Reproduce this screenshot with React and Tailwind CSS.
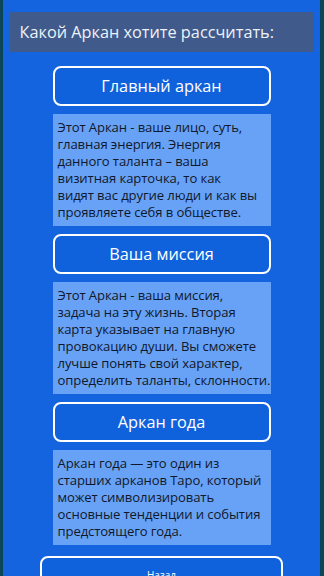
import React from 'react';

const sections = [
  {
    title: 'Главный аркан',
    lines: [
      'Этот Аркан - ваше лицо, суть,',
      'главная энергия. Энергия',
      'данного таланта – ваша',
      'визитная карточка, то как',
      'видят вас другие люди и как вы',
      'проявляете себя в обществе.',
    ],
  },
  {
    title: 'Ваша миссия',
    lines: [
      'Этот Аркан - ваша миссия,',
      'задача на эту жизнь. Вторая',
      'карта указывает на главную',
      'провокацию души. Вы сможете',
      'лучше понять свой характер,',
      'определить таланты, склонности.',
    ],
  },
  {
    title: 'Аркан года',
    lines: [
      'Аркан года — это один из',
      'старших арканов Таро, который',
      'может символизировать',
      'основные тенденции и события',
      'предстоящего года.',
    ],
  },
];

export default function App() {
  return (
    <div
      className="w-[324px] h-[576px] overflow-hidden bg-[#1464e0] border-l-[3px] border-r-[4px] border-[#0b4658] flex flex-col items-center"
      style={{ fontFamily: '"Open Sans", "Noto Sans", sans-serif' }}
    >
      <div className="shrink-0 mt-3 w-[304px] h-10 bg-[#3f5a8b] flex items-center px-[10px] text-[16.3px] text-[#eef2f8]">
        Какой Аркан хотите рассчитать:
      </div>

      <div className="shrink-0 mt-[14px] w-[218px] flex flex-col gap-2">
        {sections.map((s) => (
          <React.Fragment key={s.title}>
            <button className="shrink-0 h-10 w-full rounded-lg border-2 border-white bg-[#0f62dc] text-white text-[16.3px]">
              {s.title}
            </button>
            <div className="shrink-0 bg-[#68a2f6] px-[5px] py-[5px] text-[13.1px] tracking-[-0.1px] leading-[17px] text-[#10182b]">
              {s.lines.map((l) => (
                <div key={l} className="whitespace-nowrap">{l}</div>
              ))}
            </div>
          </React.Fragment>
        ))}
      </div>

      <button className="mt-[11px] w-[243px] h-10 shrink-0 rounded-lg border-2 border-white bg-[#0f62dc] text-white text-[10px] flex justify-center pt-[10px]">
        Назад
      </button>
    </div>
  );
}
